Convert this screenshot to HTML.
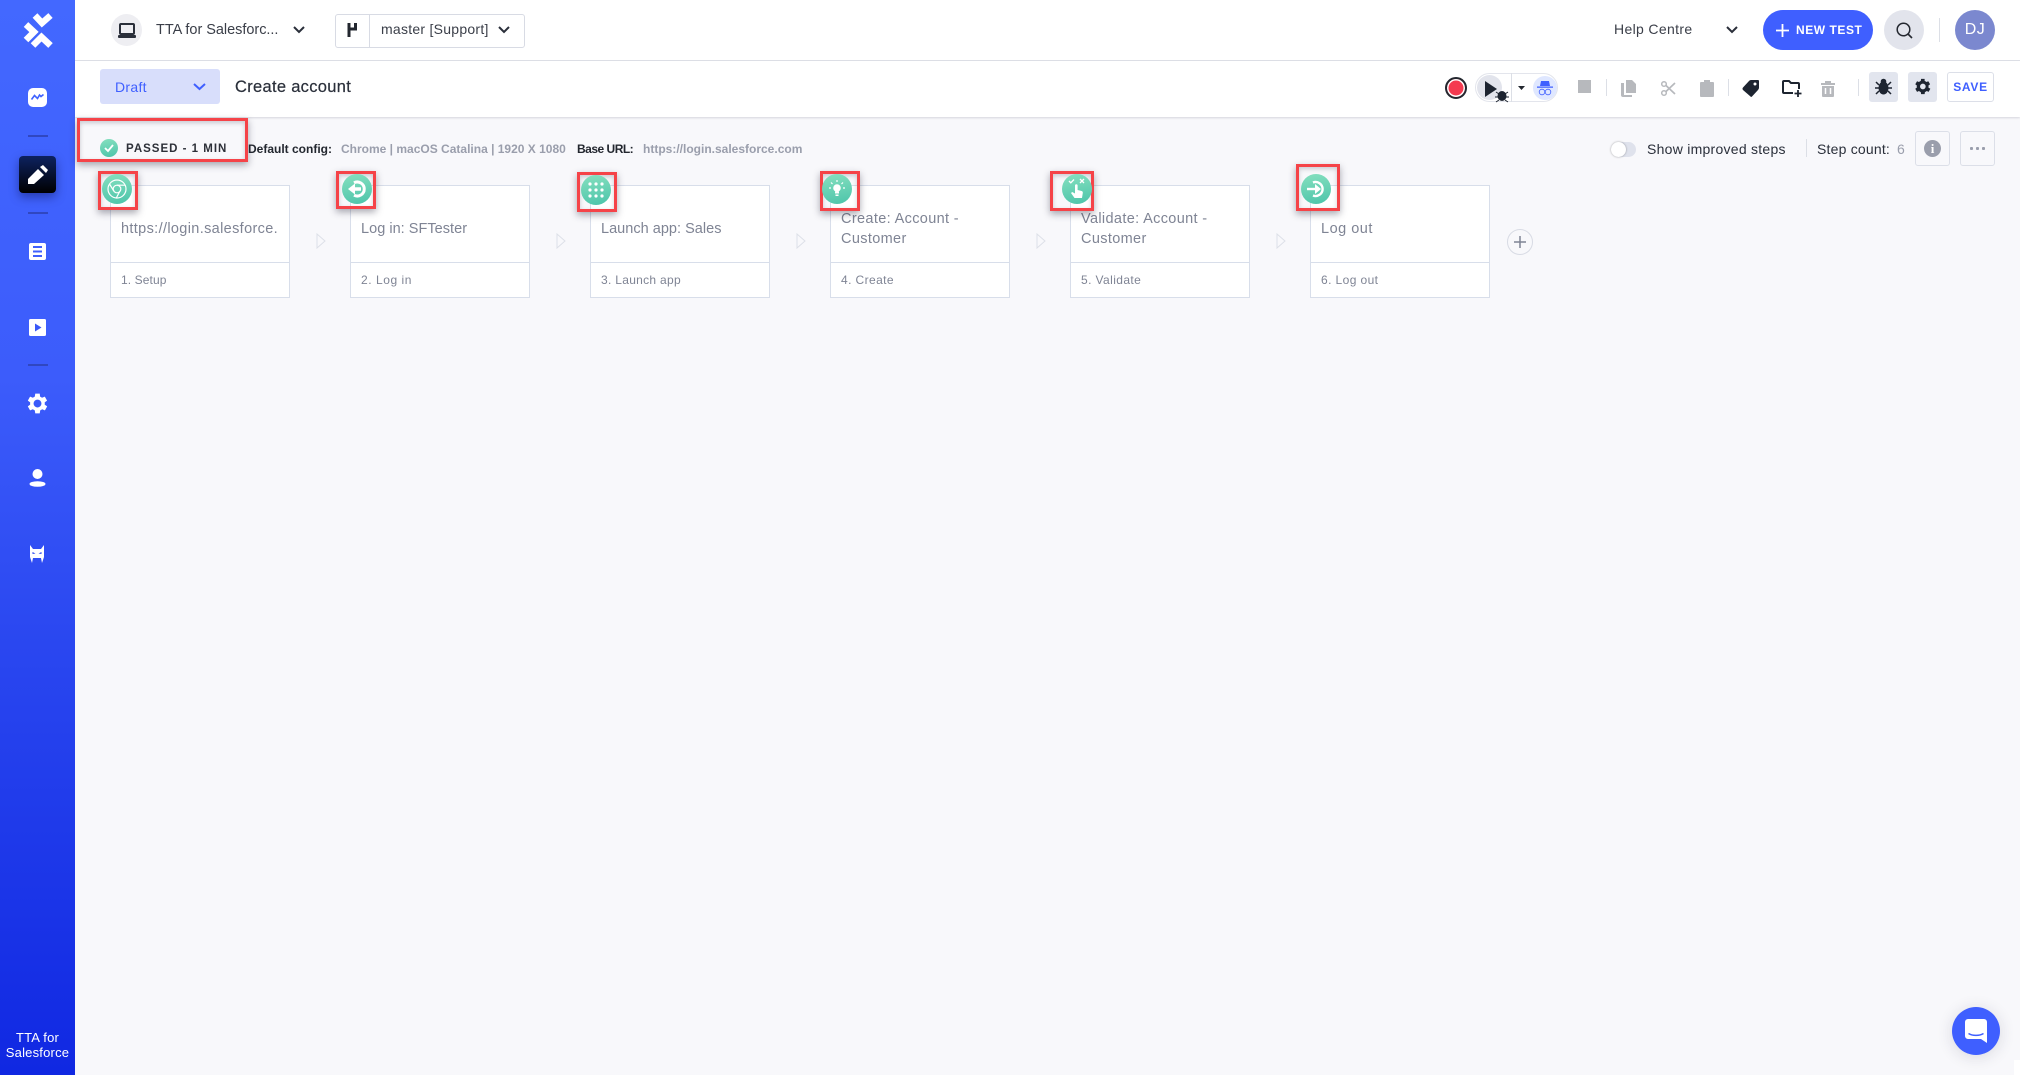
<!DOCTYPE html>
<html><head><meta charset="utf-8"><title>Create account</title>
<style>
*{box-sizing:border-box}
html,body{margin:0;padding:0}
body{width:2020px;height:1075px;position:relative;overflow:hidden;background:#f8f8fb;font-family:"Liberation Sans",sans-serif;color:#2a2f3a}
.a{position:absolute}
.t{position:absolute;white-space:nowrap;line-height:1}
svg{position:absolute;display:block;overflow:visible}
.side{left:0;top:0;width:75px;height:1075px;background:linear-gradient(180deg,#4368ff 0%,#3c5cfb 35%,#2a47f0 60%,#1028e2 100%)}
.sep{left:28px;width:20px;height:2px;background:#3047c0}
.card{position:absolute;top:185px;width:180px;height:113px;background:#fff;border:1px solid #d8deea}
.card i{position:absolute;left:0;right:0;top:76px;height:1px;background:#d8deea}
.card b{position:absolute;left:10px;font-weight:400;font-size:14.5px;color:#7f8494;letter-spacing:.35px;white-space:nowrap;line-height:20px}
.card u{position:absolute;left:10px;top:87px;text-decoration:none;font-size:12px;color:#7f8494;letter-spacing:.4px;white-space:nowrap}
.red{position:absolute;border:3px solid #f54348;box-shadow:0 3px 7px rgba(40,40,60,.4),inset 0 2px 5px rgba(40,40,60,.22)}
.ci{position:absolute;width:30px;height:30px;border-radius:50%;background:linear-gradient(170deg,#86e0bf,#4cc4aa)}
.tri{position:absolute;top:233px}
.box{position:absolute;background:#e2e5ee;border-radius:3px}
.lab{font-size:12px;font-weight:700;color:#23272f}
.val{font-size:12px;font-weight:700;color:#9a9eac}
</style></head><body>

<div class="a side"></div>
<!-- logo -->
<svg style="left:0;top:0" width="75" height="60" viewBox="0 0 75 60" fill="none" stroke="#fff" stroke-width="6.500"><path d="M35 15.500L42 23 50.500 15.500"/><path d="M26 24.500L34 32 26 40"/><path d="M33 45.500L41.500 37 50.500 45.500"/></svg>
<!-- chart -->
<svg style="left:28px;top:88px" width="20" height="20" viewBox="0 0 20 20"><rect width="19" height="19" rx="5" fill="#fff"/><path d="M3.500 11.500l3-4 3 3 2-3.500 1.500 1.500 2.500-2" fill="none" stroke="#3f62ff" stroke-width="1.600"/></svg>
<div class="a sep" style="top:135px"></div>
<div class="a" style="left:19px;top:156px;width:37px;height:37px;border-radius:4px;background:linear-gradient(180deg,#0d2260,#000);box-shadow:0 4px 10px rgba(0,0,50,.4)"></div>
<svg style="left:28px;top:165px" width="20" height="20" viewBox="0 0 20 20" fill="#fff"><path d="M0 19v-5L10 4l6 6-10 9zM12 2l3-2 5 5-2 3z"/></svg>
<div class="a sep" style="top:212px"></div>
<svg style="left:29px;top:243px" width="17" height="17" viewBox="0 0 17 17"><rect width="17" height="17" rx="2" fill="#fff"/><path d="M4 4h9M4 8.500h9M4 13h9" stroke="#3f60fc" stroke-width="2"/></svg>
<svg style="left:29px;top:319px" width="17" height="17" viewBox="0 0 17 17"><rect width="17" height="17" rx="1.500" fill="#fff"/><path d="M6 4.500l6.500 4-6.500 4z" fill="#3a58f8"/></svg>
<div class="a sep" style="top:364px"></div>
<svg style="left:24px;top:390px" width="27" height="27" viewBox="0 0 24 24"><path fill="#fff" d="M19.400 13a7.600 7.600 0 000-2l2.100-1.600-2-3.500-2.500 1a7.600 7.600 0 00-1.700-1L15 3.200h-4l-.4 2.700a7.600 7.600 0 00-1.700 1l-2.500-1-2 3.500L6.500 11a7.600 7.600 0 000 2l-2.100 1.600 2 3.500 2.500-1a7.600 7.600 0 001.700 1l.4 2.700h4l.4-2.700a7.600 7.600 0 001.700-1l2.500 1 2-3.500zM13 15.500a3.500 3.500 0 110-7 3.500 3.500 0 010 7z" transform="translate(-1 0)"/></svg>
<svg style="left:29px;top:469px" width="17" height="18" viewBox="0 0 17 18" fill="#fff"><circle cx="8.500" cy="5" r="5"/><ellipse cx="8.500" cy="15" rx="8" ry="2.800"/></svg>
<svg style="left:30px;top:545px" width="14" height="18" viewBox="0 0 14 18" fill="#fff"><path d="M0 0l3 4h8l3-4v12l-2 6-1-5H3l-1 5-2-6z"/><path d="M2.500 7l3 1.500-3 .5zM11.500 7l-3 1.500 3 .5z" fill="#2b47ef"/></svg>
<div class="t" style="left:0;width:75px;top:1030px;text-align:center;color:#fff;font-size:13px;line-height:15px;white-space:normal;letter-spacing:.2px">TTA for<br>Salesforce</div>

<!-- header -->
<div class="a" style="left:75px;top:0;width:1945px;height:61px;background:#fff;border-bottom:1px solid #dfe1e8"></div>
<div class="a" style="left:111px;top:14px;width:31px;height:32px;border-radius:50%;background:#eeeef2"></div>
<svg style="left:117px;top:23px" width="20" height="16" viewBox="0 0 20 16"><rect x="3" y="1" width="14" height="10" rx="1" fill="none" stroke="#2a2f3a" stroke-width="2"/><rect x="1" y="12" width="18" height="3" rx="1" fill="#2a2f3a"/></svg>
<div class="t" style="left:156px;top:23px;font-size:14.5px;letter-spacing:-.03px;color:#3a3e48">TTA for Salesforc...</div>
<svg style="left:293px;top:26px" width="12" height="8" viewBox="0 0 12 8"><path d="M1 1l5 5 5-5" fill="none" stroke="#2a2f3a" stroke-width="2"/></svg>
<div class="a" style="left:335px;top:14px;width:190px;height:34px;background:#fff;border:1px solid #d8dbe4;border-radius:3px"></div>
<div class="a" style="left:369px;top:14px;width:1px;height:34px;background:#d8dbe4"></div>
<svg style="left:347px;top:22px" width="11" height="16" viewBox="0 0 11 16"><path d="M2 1v14M8.500 1v6H2" fill="none" stroke="#23272f" stroke-width="3"/></svg>
<div class="t" style="left:381px;top:22px;font-size:14px;letter-spacing:.26px;color:#3a3e48">master [Support]</div>
<svg style="left:498px;top:26px" width="12" height="8" viewBox="0 0 12 8"><path d="M1 1l5 5 5-5" fill="none" stroke="#2a2f3a" stroke-width="2"/></svg>

<div class="t" style="left:1614px;top:22px;font-size:14px;letter-spacing:.35px;color:#3a3e48">Help Centre</div>
<svg style="left:1726px;top:26px" width="12" height="8" viewBox="0 0 12 8"><path d="M1 1l5 5 5-5" fill="none" stroke="#2a2f3a" stroke-width="2"/></svg>
<div class="a" style="left:1763px;top:10px;width:110px;height:40px;border-radius:20px;background:#3f5fff"></div>
<svg style="left:1775px;top:23px" width="15" height="15" viewBox="0 0 15 15"><path d="M7.500 1v13M1 7.500h13" stroke="#fff" stroke-width="1.800"/></svg>
<div class="t" style="left:1796px;top:24px;font-size:12px;font-weight:700;letter-spacing:.55px;color:#fff">NEW TEST</div>
<div class="a" style="left:1884px;top:10px;width:40px;height:40px;border-radius:50%;background:#e2e4ec"></div>
<svg style="left:1896px;top:22px" width="17" height="17" viewBox="0 0 17 17"><circle cx="7.500" cy="7.500" r="6.300" fill="none" stroke="#23272f" stroke-width="1.500"/><path d="M12 12l4 4" stroke="#23272f" stroke-width="1.600"/></svg>
<div class="a" style="left:1939px;top:18px;width:1px;height:24px;background:#dcdfe6"></div>
<div class="a" style="left:1955px;top:10px;width:40px;height:40px;border-radius:50%;background:#7b88cf;color:#fff;font-size:16px;text-align:center;line-height:40px;letter-spacing:.5px">DJ</div>

<!-- toolbar -->
<div class="a" style="left:75px;top:61px;width:1945px;height:56px;background:#fff;box-shadow:0 1px 2px rgba(60,60,90,.18)"></div>
<div class="a" style="left:100px;top:69px;width:120px;height:35px;border-radius:3px;background:#d8defb"></div>
<div class="t" style="left:115px;top:80px;font-size:14px;color:#3f5fff;letter-spacing:.3px">Draft</div>
<svg style="left:193px;top:83px" width="13" height="8" viewBox="0 0 13 8"><path d="M1 1l5.500 5 5.500-5" fill="none" stroke="#3f5fff" stroke-width="2"/></svg>
<div class="t" style="left:235px;top:79px;font-size:16.500px;color:#2a2f3a;letter-spacing:.3px;-webkit-text-stroke:.2px #2a2f3a">Create account</div>

<div class="a" style="left:1445px;top:77px;width:22px;height:22px;border-radius:50%;background:#f43a50;border:2.500px solid #23272f;box-shadow:inset 0 0 0 1.500px #fff"></div>
<div class="a" style="left:1475px;top:73px;width:83px;height:29px;border-radius:15px;background:#fff;border:1px solid #e3e5ec"></div>
<div class="a" style="left:1477px;top:75px;width:25px;height:25px;border-radius:50%;background:#e2e4ec"></div>
<svg style="left:1484px;top:81px" width="28" height="22" viewBox="0 0 28 22"><path d="M1 0l12 8L1 16z" fill="#1d2430"/><ellipse cx="18" cy="15" rx="4.500" ry="5" fill="#1d2430"/><path d="M12 11l3 2M24 11l-3 2M11 16h3M25 16h-3M12 21l3-2M24 21l-3-2" stroke="#1d2430" stroke-width="1"/></svg>
<div class="a" style="left:1511px;top:73px;width:1px;height:29px;background:#dcdfe6"></div>
<svg style="left:1518px;top:86px" width="7" height="4" viewBox="0 0 7 4"><path d="M0 0h7L3.500 4z" fill="#23272f"/></svg>
<div class="a" style="left:1533px;top:76px;width:24px;height:24px;border-radius:50%;background:#dfe7ff"></div>
<svg style="left:1536px;top:81px" width="18" height="15" viewBox="0 0 18 15"><path d="M5 0h8l1 5H4zM1 5.500h16v1.200H1z" fill="#3f5fff"/><circle cx="6" cy="11" r="2.800" fill="none" stroke="#3f5fff" stroke-width=".8"/><circle cx="12" cy="11" r="2.800" fill="none" stroke="#3f5fff" stroke-width=".8"/></svg>
<div class="a" style="left:1578px;top:80px;width:13px;height:13px;background:#b7b9bd"></div>
<div class="a" style="left:1606px;top:79px;width:1px;height:17px;background:#dcdfe6"></div>
<svg style="left:1621px;top:80px" width="15" height="17" viewBox="0 0 15 17" fill="#b7b9bd"><path d="M5 0h6l4 4v9H5z"/><path d="M0 3h3v12h8v2H2a2 2 0 01-2-2z"/></svg>
<svg style="left:1661px;top:81px" width="14" height="15" viewBox="0 0 14 15"><circle cx="3" cy="3" r="2.300" fill="none" stroke="#b7b9bd" stroke-width="1.500"/><circle cx="3" cy="12" r="2.300" fill="none" stroke="#b7b9bd" stroke-width="1.500"/><path d="M5 4.500L14 13M5 10.500L14 2" stroke="#b7b9bd" stroke-width="1.700"/></svg>
<svg style="left:1700px;top:80px" width="14" height="17" viewBox="0 0 14 17" fill="#b7b9bd"><path d="M1 2h3V0h6v2h3a1 1 0 011 1v13a1 1 0 01-1 1H1a1 1 0 01-1-1V3a1 1 0 011-1z"/></svg>
<div class="a" style="left:1728px;top:79px;width:1px;height:17px;background:#dcdfe6"></div>
<svg style="left:1742px;top:80px" width="17" height="17" viewBox="0 0 17 17"><path d="M9 0h7a1 1 0 011 1v7a4 4 0 01-1 2l-6 6.500a1 1 0 01-1.500 0L1 10a2 2 0 010-2.500L7 1a3 3 0 012-1z" fill="#1d2430"/><circle cx="13" cy="4" r="1.500" fill="#fff"/></svg>
<svg style="left:1782px;top:80px" width="20" height="18" viewBox="0 0 20 18"><path d="M11 13H2a1 1 0 01-1-1V2a1 1 0 011-1h5l2 2h7a1 1 0 011 1v5" fill="none" stroke="#1d2430" stroke-width="2"/><path d="M16 10v7M12.500 13.500h7" stroke="#1d2430" stroke-width="1.800"/></svg>
<svg style="left:1821px;top:81px" width="14" height="16" viewBox="0 0 14 16" fill="#b7b9bd"><path d="M0 2h4V0h6v2h4v2H0zM1 5h12v10a1 1 0 01-1 1H2a1 1 0 01-1-1z"/><path d="M4.500 7v6M9.500 7v6" stroke="#fff" stroke-width="1.500"/></svg>
<div class="a" style="left:1858px;top:79px;width:1px;height:17px;background:#dcdfe6"></div>
<div class="box" style="left:1869px;top:72px;width:29px;height:30px"></div>
<svg style="left:1875px;top:78px" width="17" height="17" viewBox="0 0 17 17"><ellipse cx="8.500" cy="10" rx="5" ry="6.500" fill="#1d2430"/><circle cx="8.500" cy="3.500" r="2.800" fill="#1d2430"/><path d="M1 4l3 3M16 4l-3 3M0 10h4M17 10h-4M1 16l3-3M16 16l-3-3" stroke="#1d2430" stroke-width="1.500"/></svg>
<div class="box" style="left:1908px;top:72px;width:29px;height:30px"></div>
<svg style="left:1914px;top:78px" width="17" height="17" viewBox="0 0 24 24"><path fill="#1d2430" d="M20.400 13.500a8 8 0 000-3l2.300-1.700-2.500-4.300-2.600 1.100a8 8 0 00-2.600-1.500L15 1.300h-5l-.4 2.800A8 8 0 007 5.600L4.300 4.500 1.800 8.800 4 10.500a8 8 0 000 3l-2.200 1.700 2.500 4.300L7 18.400a8 8 0 002.600 1.500l.4 2.800h5l.4-2.800a8 8 0 002.600-1.500l2.600 1.100 2.500-4.300zM12.500 16a4 4 0 110-8 4 4 0 010 8z"/></svg>
<div class="a" style="left:1947px;top:72px;width:47px;height:30px;background:#fff;border:1px solid #dcdfe8;border-radius:3px;color:#3f5fff;font-size:12px;font-weight:700;letter-spacing:.7px;text-align:center;line-height:28px">SAVE</div>

<!-- info row -->
<div class="t" style="left:126px;top:144px;font-size:11.500px;font-weight:700;letter-spacing:1px;color:#2d3038">PASSED - 1 MIN</div>
<div class="a" style="left:100px;top:139px;width:18px;height:18px;border-radius:50%;background:linear-gradient(170deg,#86e0bf,#4cc4aa)"></div>
<svg style="left:104px;top:144px" width="10" height="8" viewBox="0 0 10 8"><path d="M1 4l3 3 5-6" fill="none" stroke="#fff" stroke-width="1.800"/></svg>
<div class="t lab" style="left:248px;top:143px">Default config:</div>
<div class="t val" style="left:341px;top:143px">Chrome | macOS Catalina | 1920 X 1080</div>
<div class="t lab" style="left:577px;top:143px;letter-spacing:-.5px">Base URL:</div>
<div class="t val" style="left:643px;top:143px">https://login.salesforce.com</div>

<div class="a" style="left:1611px;top:142px;width:25px;height:15px;border-radius:8px;background:#dfe2ec"></div>
<div class="a" style="left:1611px;top:142px;width:15px;height:15px;border-radius:50%;background:#fff;box-shadow:0 0 2px rgba(0,0,0,.35)"></div>
<div class="t" style="left:1647px;top:142px;font-size:14px;letter-spacing:.26px;color:#2a2f3a">Show improved steps</div>
<div class="a" style="left:1806px;top:139px;width:1px;height:18px;background:#dcdfe6"></div>
<div class="t" style="left:1817px;top:142px;font-size:14px;letter-spacing:.2px;color:#2a2f3a">Step count:</div>
<div class="t" style="left:1897px;top:142px;font-size:14px;color:#9a9eac">6</div>
<div class="a" style="left:1915px;top:131px;width:35px;height:35px;border:1px solid #dcdfe8;border-radius:3px"></div>
<div class="a" style="left:1924px;top:140px;width:17px;height:17px;border-radius:50%;background:#9a9eac;color:#fff;font-family:'Liberation Serif',serif;font-weight:700;font-size:13px;line-height:17px;text-align:center">i</div>
<div class="a" style="left:1960px;top:131px;width:35px;height:35px;border:1px solid #dcdfe8;border-radius:3px"></div>
<svg style="left:1970px;top:147px" width="15" height="3" viewBox="0 0 15 3" fill="#9a9eac"><rect width="3" height="3" rx="1"/><rect x="6" width="3" height="3" rx="1"/><rect x="12" width="3" height="3" rx="1"/></svg>

<!-- cards -->
<div class="card" style="left:110px"><b style="top:33px">https://login.salesforce.</b><i></i><u style="letter-spacing:.1px">1. Setup</u></div>
<div class="card" style="left:350px"><b style="top:33px;letter-spacing:.03px">Log in: SFTester</b><i></i><u style="letter-spacing:.55px">2. Log in</u></div>
<div class="card" style="left:590px"><b style="top:33px;letter-spacing:.02px">Launch app: Sales</b><i></i><u style="letter-spacing:.3px">3. Launch app</u></div>
<div class="card" style="left:830px"><b style="top:23px">Create: Account -<br>Customer</b><i></i><u>4. Create</u></div>
<div class="card" style="left:1070px"><b style="top:23px">Validate: Account -<br>Customer</b><i></i><u>5. Validate</u></div>
<div class="card" style="left:1310px"><b style="top:33px;letter-spacing:.5px">Log out</b><i></i><u>6. Log out</u></div>

<svg class="tri" style="left:316px" width="10" height="16" viewBox="0 0 10 16"><path d="M1 1l8 7-8 7z" fill="none" stroke="#dde0e8"/></svg>
<svg class="tri" style="left:556px" width="10" height="16" viewBox="0 0 10 16"><path d="M1 1l8 7-8 7z" fill="none" stroke="#dde0e8"/></svg>
<svg class="tri" style="left:796px" width="10" height="16" viewBox="0 0 10 16"><path d="M1 1l8 7-8 7z" fill="none" stroke="#dde0e8"/></svg>
<svg class="tri" style="left:1036px" width="10" height="16" viewBox="0 0 10 16"><path d="M1 1l8 7-8 7z" fill="none" stroke="#dde0e8"/></svg>
<svg class="tri" style="left:1276px" width="10" height="16" viewBox="0 0 10 16"><path d="M1 1l8 7-8 7z" fill="none" stroke="#dde0e8"/></svg>
<div class="a" style="left:1507px;top:229px;width:26px;height:26px;border-radius:50%;border:1px solid #d8dbe4"></div>
<svg style="left:1514px;top:236px" width="12" height="12" viewBox="0 0 12 12"><path d="M6 0v12M0 6h12" stroke="#7f8494" stroke-width="1.500"/></svg>

<!-- red highlights -->
<div class="red" style="left:77px;top:118px;width:171px;height:44px"></div>
<div class="red" style="left:98px;top:171px;width:40px;height:39px"></div>
<div class="red" style="left:336px;top:171px;width:40px;height:38px"></div>
<div class="red" style="left:577px;top:172px;width:40px;height:40px"></div>
<div class="red" style="left:820px;top:171px;width:40px;height:40px"></div>
<div class="red" style="left:1050px;top:171px;width:44px;height:40px"></div>
<div class="red" style="left:1296px;top:164px;width:44px;height:47px"></div>

<!-- step icons -->
<div class="ci" style="left:102px;top:174px"></div>
<svg style="left:107px;top:179px" width="20" height="20" viewBox="0 0 20 20" fill="none" stroke="#fff" stroke-width="1.200"><circle cx="10" cy="10" r="9"/><circle cx="10" cy="10" r="3.800"/><path d="M10 6.200h8.500M6.800 12L2.500 5M13 12l-4 7.500"/></svg>
<div class="ci" style="left:342px;top:174px"></div>
<svg style="left:347px;top:179px" width="20" height="20" viewBox="0 0 20 20"><path d="M7 3.800a7 7 0 110 12.400" fill="none" stroke="#fff" stroke-width="3"/><path d="M1 10l7-5.500v11z" fill="#fff"/><path d="M7 10h7" stroke="#fff" stroke-width="3.500"/></svg>
<div class="ci" style="left:581px;top:175px"></div>
<svg style="left:588px;top:182px" width="16" height="16" viewBox="0 0 16 16" fill="#fff"><circle cx="2" cy="2" r="1.600"/><circle cx="8" cy="2" r="1.600"/><circle cx="14" cy="2" r="1.600"/><circle cx="2" cy="8" r="1.600"/><circle cx="8" cy="8" r="1.600"/><circle cx="14" cy="8" r="1.600"/><circle cx="2" cy="14" r="1.600"/><circle cx="8" cy="14" r="1.600"/><circle cx="14" cy="14" r="1.600"/></svg>
<div class="ci" style="left:822px;top:174px"></div>
<svg style="left:827px;top:179px" width="20" height="20" viewBox="0 0 20 20"><circle cx="10" cy="9" r="3.800" fill="#fff"/><path d="M8 12.500h4v2H8zM8.500 15.500h3V17h-3z" fill="#fff"/><path d="M10 1v2M4 3.500l1.500 1.500M16 3.500L14.500 5M2 9h2M16 9h2" stroke="#fff" stroke-width="1.200"/></svg>
<div class="ci" style="left:1062px;top:174px"></div>
<svg style="left:1067px;top:178px" width="20" height="22" viewBox="0 0 20 22"><path d="M8 7.500a1.300 1.300 0 012.600 0v4.500l4 1c.9.3 1.400 1 1.200 2l-.8 5H7.500l-3.500-5 1.200-1 2.800 1.500z" fill="#fff"/><path d="M2 3l1.800 1.800L7 1.500" fill="none" stroke="#fff" stroke-width="1.300"/><path d="M13 1l4 4M17 1l-4 4" stroke="#fff" stroke-width="1.300"/></svg>
<div class="ci" style="left:1301px;top:174px"></div>
<svg style="left:1306px;top:179px" width="20" height="20" viewBox="0 0 20 20"><path d="M7 3.500a7 7 0 110 13" fill="none" stroke="#fff" stroke-width="2.400"/><path d="M1 10h9" stroke="#fff" stroke-width="2.400"/><path d="M9 5l6 5-6 5z" fill="#fff"/></svg>

<!-- chat -->
<div class="a" style="left:1952px;top:1007px;width:48px;height:48px;border-radius:50%;background:#3f5fff;box-shadow:0 2px 16px rgba(30,30,60,.14)"></div>
<svg style="left:1965px;top:1019px" width="22" height="24" viewBox="0 0 22 24"><path d="M3 0h16a3 3 0 013 3v21l-6-4H3a3 3 0 01-3-3V3a3 3 0 013-3z" fill="#fff"/><path d="M3.500 14.500c4 2.500 11 2.500 15 0" fill="none" stroke="#3f5fff" stroke-width="1.400"/></svg>
<div class="a" style="left:2014px;top:1060px;width:6px;height:15px;background:#fff"></div>
</body></html>
